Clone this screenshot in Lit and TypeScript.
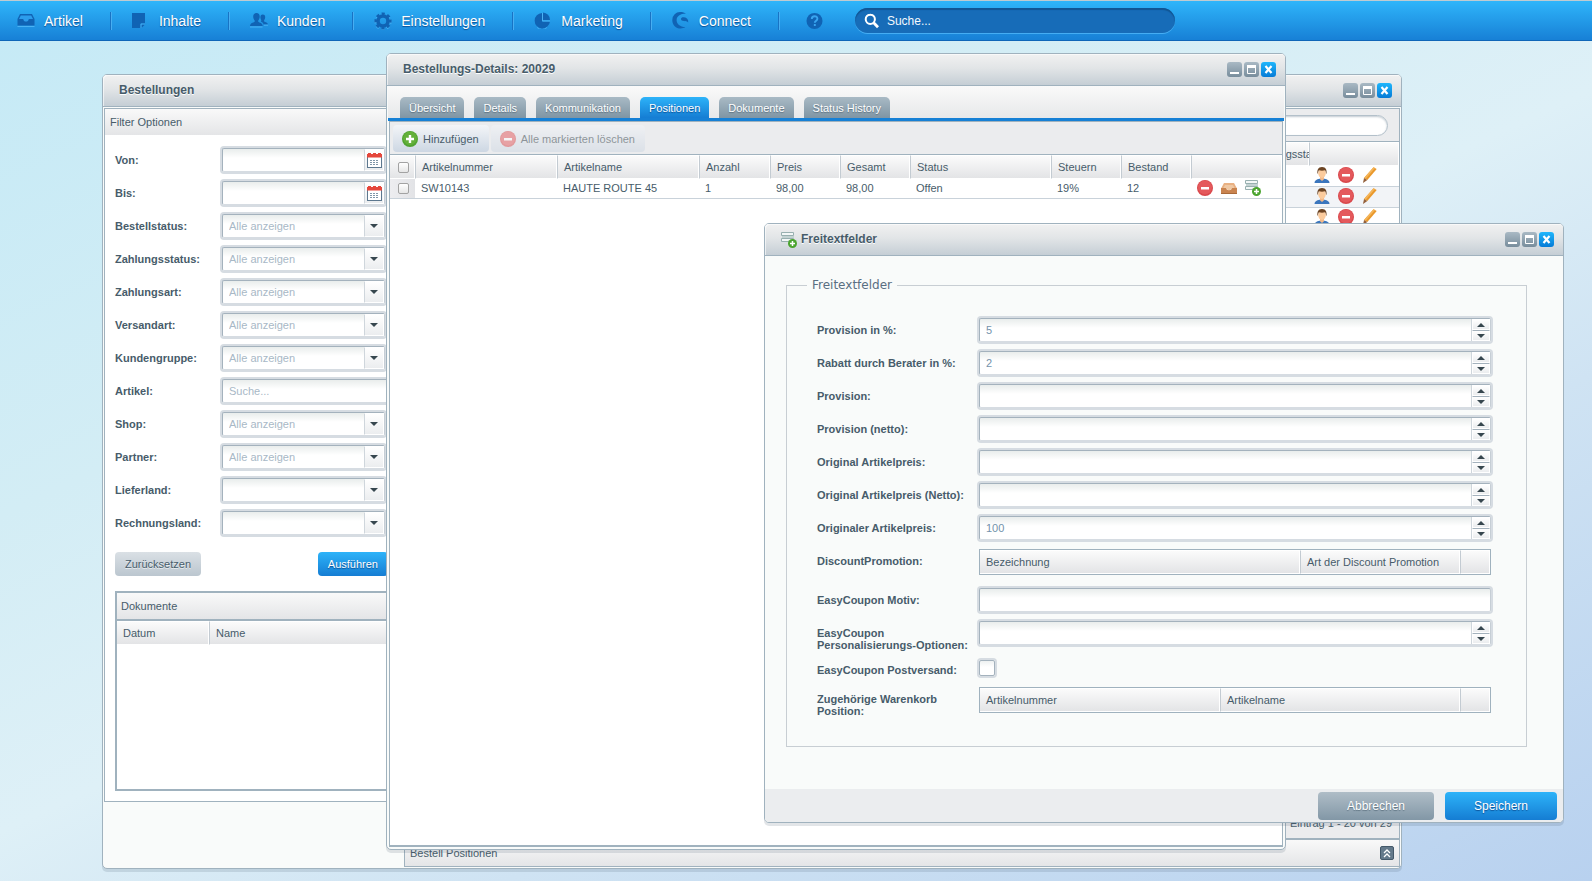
import { LitElement, html, css, svg, nothing } from "lit";
import { customElement, property } from "lit/decorators.js";
import { classMap } from "lit/directives/class-map.js";

/* ---------- icons ---------- */

const trayNav = html`<svg width="18" height="17" viewBox="0 0 18 17" aria-hidden="true">
  <path d="M3 2h12l2.500 5v6.500h-17V7z" fill="#1063b4"/>
  <path d="M3.800 3.500h10.400L16 7h-4.200c-.4 1.800-1.300 2.600-2.800 2.600S6.600 8.800 6.200 7H2z" fill="#2c9dec"/>
  <path d="M.5 14.500h17" stroke="#4ab3f5"/></svg>`;
const pageNav = html`<svg width="18" height="17" viewBox="0 0 18 17" aria-hidden="true">
  <path d="M0 1h13v10.500H8.500V16H0z" fill="#1063b4"/>
  <path d="M9.500 12.500H13L9.500 16z" fill="#1063b4"/>
  <path d="M9 16v-4h4" fill="none" stroke="#4ab3f5" stroke-width=".8"/></svg>`;
const usersNav = html`<svg width="18" height="17" viewBox="0 0 18 17" aria-hidden="true">
  <path d="M6.500 1c2.200 0 3.300 1.500 3.200 3.800-.1 1.600-.6 2.800-1.500 3.600v1.400c1.300.9 4.300 1.300 4.500 4.200H0c.2-2.900 3.200-3.300 4.700-4.200V8.400C3.800 7.600 3.300 6.400 3.200 4.800 3.200 2.500 4.300 1 6.500 1z" fill="#1063b4"/>
  <path d="M12.700 2.500c1.800 0 2.600 1.200 2.500 3-.1 1.200-.5 2.100-1.100 2.800v1.100c1.200.7 3.700 1 3.900 3.100h-4.300c-.5-1.600-1.700-2.400-2.900-3 .3-.3.5-.8.500-1.200-.5-.6-.8-1.600-.9-2.800 0-1.800.6-3 2.300-3z" fill="#1063b4"/>
  <path d="M0 15h12.500M14 13.200h4" stroke="#4ab3f5"/></svg>`;
const gearNav = html`<svg width="18" height="18" viewBox="0 0 18 18" aria-hidden="true">
  <circle cx="9" cy="10" r="7" fill="none" stroke="#4ab3f5" stroke-width="3" stroke-dasharray="3 2.498" stroke-dashoffset="1.500"/>
  <circle cx="9" cy="9" r="5" fill="none" stroke="#1063b4" stroke-width="3.600"/>
  <circle cx="9" cy="9" r="7" fill="none" stroke="#1063b4" stroke-width="3.200" stroke-dasharray="3 2.498" stroke-dashoffset="1.500"/></svg>`;
const pieNav = html`<svg width="18" height="17" viewBox="0 0 18 17" aria-hidden="true">
  <path d="M8 1a7.700 7.700 0 1 0 8 8.500H8z" fill="#1063b4"/>
  <path d="M9 .5A7.500 7.500 0 0 1 16 8H9z" fill="#1063b4"/>
  <path d="M8.500 1v8H16" fill="none" stroke="#4ab3f5"/>
  <path d="M3 15.500a8 8 0 0 0 10 0" fill="none" stroke="#4ab3f5" stroke-width=".8"/></svg>`;
const connectNav = html`<svg width="18" height="17" viewBox="0 0 18 17" aria-hidden="true">
  <path d="M14 1.600C12.500.6 10.500 0 8.500 0A8 8 0 0 0 .300 8.200C.300 13 4 16.500 8.500 16.500c2 0 3.500-.4 4.800-1.400C8 15 4.600 12 4.600 8.300 4.600 4.500 8 1.800 14 1.600z" fill="#1063b4"/>
  <path d="M9 7c0-1.500 1.400-2 3-1.800 3 .3 4.600 2.300 4.200 5.300-1.200-1.300-2.600-1.300-4.200-1.500C10 8.800 9 8.300 9 7z" fill="#1063b4"/></svg>`;
const helpNav = html`<svg width="17" height="18" viewBox="0 0 17 18" aria-hidden="true">
  <circle cx="8.500" cy="9" r="8" fill="#1063b4"/>
  <path d="M5.800 7c0-3.700 5.600-3.600 5.600-.3 0 2-2.600 1.900-2.600 4M8.800 12v2" fill="none" stroke="#39a5f0" stroke-width="1.900"/></svg>`;
const lens = html`<svg width="16" height="16" viewBox="0 0 16 16" aria-hidden="true">
  <circle cx="6.300" cy="6.300" r="4.600" fill="none" stroke="#fff" stroke-width="2"/>
  <path d="M9.700 9.700l4.300 4.500" stroke="#fff" stroke-width="2.800"/></svg>`;
const plusIcon = html`<svg width="16" height="16" viewBox="0 0 16 16" aria-hidden="true">
  <circle cx="8" cy="8" r="8" fill="#51a332"/><circle cx="8" cy="7.200" r="6.800" fill="#63b03a"/>
  <path d="M8 4v8M4 8h8" stroke="#fff" stroke-width="2.400"/></svg>`;
const minusIcon = html`<svg width="16" height="16" viewBox="0 0 16 16" aria-hidden="true">
  <circle cx="8" cy="8" r="8" fill="#d9484c"/><circle cx="8" cy="7.400" r="7" fill="#e4595c"/>
  <rect x="4" y="7" width="8" height="2.500" fill="#fff"/></svg>`;
const trayIcon = html`<svg width="16" height="16" viewBox="0 0 16 16" aria-hidden="true">
  <path d="M3 3h10l3 5.500H0z" fill="#e9b183"/><path d="M0 8h5.200c.3 1.600 1 2.200 2.800 2.200s2.500-.6 2.800-2.200H16v5.500H0z" fill="#c98450"/>
  <path d="M0 13h16v1H0z" fill="#a96a3a"/><path d="M4 5h8l1.500 3h-2.800c-.3 1.500-1 2-2.700 2s-2.400-.5-2.700-2H2.500z" fill="#f0c9a4"/></svg>`;
const fieldsShapes = svg`
  <path d="M.5.500h12v3H.5zM.5 6.500h12v3H.5z" fill="#f3f7f7" stroke="#98b0b0"/>
  <path d="M1 4h12v2H1z" fill="#c3d2d2"/>
  <circle cx="11.500" cy="11.500" r="4.500" fill="#4ba42f"/><path d="M11.500 9v5M9 11.500h5" stroke="#fff" stroke-width="1.500"/>`;
const fieldsIcon = html`<svg width="16" height="16" viewBox="0 0 16 16" aria-hidden="true">${fieldsShapes}</svg>`;
const userIcon = html`<svg width="16" height="16" viewBox="0 0 16 16" aria-hidden="true">
  <path d="M.5 16c0-2.600 2-3.700 5-4.300h5c3 .6 5 1.700 5 4.300z" fill="#3b76bd"/>
  <path d="M6 9h4v3.200L8 14l-2-1.800z" fill="#f3b98a"/>
  <ellipse cx="8" cy="6.300" rx="3.800" ry="4.700" fill="#fbcb9d"/>
  <path d="M3.500 7C3 3 4 0 8 0s5 3 4.500 7c-.8-.8-.5-3-1.500-3.700-2 .5-4 .5-6 0-1 .7-.7 2.900-1.500 3.700z" fill="#6d4524"/></svg>`;
const pencilIcon = html`<svg width="16" height="16" viewBox="0 0 16 16" aria-hidden="true">
  <path d="M11.500.3l3.200 1.800L5.300 13 2 11z" fill="#e9982b"/><path d="M11.500.3l1.500.8L3.500 12 2 11z" fill="#f4b55a"/>
  <path d="M2 11l3.300 2L1 16z" fill="#94603b"/></svg>`;
const calendarIcon = html`<svg width="15" height="15" viewBox="0 0 15 15" aria-hidden="true">
  <rect x=".5" y="1.500" width="14" height="13" fill="#fff" stroke="#5d788f"/>
  <path d="M0 1h1V0h3v1h2V0h3v1h2V0h3v1h1v3.500H0z" fill="#e5473c"/>
  <path d="M3 7.500h9M3 9.500h9M3 11.500h9" stroke="#7f96a8" stroke-dasharray="2 1"/></svg>`;
const arrowDown = svg`<path d="M0 0h8L4 4z" fill="#37474f"/>`;
const arrowUp = svg`<path d="M0 4h8L4 0z" fill="#37474f"/>`;
const arrow = (shape: unknown) =>
  html`<svg width="8" height="4" viewBox="0 0 8 4" aria-hidden="true">${shape}</svg>`;

/* ---------- window frame ---------- */

@customElement("desk-window")
export class DeskWindow extends LitElement {
  @property() heading = "";

  static styles = css`
    :host {
      display: flex;
      flex-direction: column;
      box-sizing: border-box;
      border: 1px solid #a0b2be;
      border-radius: 5px;
      background: #f9fbfa;
      box-shadow: 0 3px 0 rgba(60, 80, 100, 0.15);
    }
    header {
      display: flex;
      align-items: center;
      height: 31px;
      padding: 0 9px 0 16px;
      border-bottom: 1px solid #a0b2be;
      border-radius: 4px 4px 0 0;
      background: linear-gradient(#f1f1f1, #e2e5e7 45%, #c5ced5);
      box-shadow: inset 1px 1px 0 rgba(255, 255, 255, 0.6);
    }
    h2 {
      flex: 1;
      margin: 0;
      padding-bottom: 2px;
      font-size: 12px;
      line-height: 16px;
      font-weight: bold;
      color: #475c6a;
      text-shadow: 0 1px 0 #fff;
    }
    ::slotted(svg) {
      margin-right: 4px;
    }
    .tools {
      display: flex;
      gap: 2px;
    }
    button {
      display: block;
      width: 15px;
      height: 15px;
      padding: 0;
      border: 0;
      border-radius: 3px;
      background: linear-gradient(#a9b9c4, #788d9c);
    }
    button.close {
      background: linear-gradient(#1fb6fc, #067bd6);
    }
    svg {
      display: block;
    }
    .body {
      flex: 1;
      display: flex;
      flex-direction: column;
      min-height: 0;
      padding: 0 1px;
    }
  `;

  render() {
    return html`
      <header>
        <slot name="icon"></slot>
        <h2>${this.heading}</h2>
        <div class="tools">
          <button aria-label="Minimieren">
            <svg width="15" height="15"><path d="M3 11h9" stroke="#fff" stroke-width="2" /></svg>
          </button>
          <button aria-label="Maximieren">
            <svg width="15" height="15">
              <path d="M3.500 4v7.500h8V4" fill="none" stroke="#fff" />
              <path d="M3 4.500h9" stroke="#fff" stroke-width="3" />
            </svg>
          </button>
          <button class="close" aria-label="Schließen">
            <svg width="15" height="15"><path d="M4.500 4l6 7M10.500 4l-6 7" stroke="#fff" stroke-width="2.200" /></svg>
          </button>
        </div>
      </header>
      <div class="body"><slot></slot></div>
    `;
  }
}

/* ---------- data ---------- */

const menu = [
  { label: "Artikel", icon: trayNav },
  { label: "Inhalte", icon: pageNav },
  { label: "Kunden", icon: usersNav },
  { label: "Einstellungen", icon: gearNav },
  { label: "Marketing", icon: pieNav },
  { label: "Connect", icon: connectNav },
];

type FilterKind = "date" | "combo" | "text";
const filters: { label: string; kind: FilterKind; hint: string }[] = [
  { label: "Von:", kind: "date", hint: "" },
  { label: "Bis:", kind: "date", hint: "" },
  { label: "Bestellstatus:", kind: "combo", hint: "Alle anzeigen" },
  { label: "Zahlungsstatus:", kind: "combo", hint: "Alle anzeigen" },
  { label: "Zahlungsart:", kind: "combo", hint: "Alle anzeigen" },
  { label: "Versandart:", kind: "combo", hint: "Alle anzeigen" },
  { label: "Kundengruppe:", kind: "combo", hint: "Alle anzeigen" },
  { label: "Artikel:", kind: "text", hint: "Suche..." },
  { label: "Shop:", kind: "combo", hint: "Alle anzeigen" },
  { label: "Partner:", kind: "combo", hint: "Alle anzeigen" },
  { label: "Lieferland:", kind: "combo", hint: "" },
  { label: "Rechnungsland:", kind: "combo", hint: "" },
];

const tabs = ["Übersicht", "Details", "Kommunikation", "Positionen", "Dokumente", "Status History"];

const positionColumns = [
  { title: "Artikelnummer", cls: "wide", value: "SW10143" },
  { title: "Artikelname", cls: "wide", value: "HAUTE ROUTE 45" },
  { title: "Anzahl", cls: "count", value: "1" },
  { title: "Preis", cls: "narrow", value: "98,00" },
  { title: "Gesamt", cls: "narrow", value: "98,00" },
  { title: "Status", cls: "status", value: "Offen" },
  { title: "Steuern", cls: "narrow", value: "19%" },
  { title: "Bestand", cls: "narrow", value: "12" },
];

const amounts = [
  { label: "Provision in %:", value: "5" },
  { label: "Rabatt durch Berater in %:", value: "2" },
  { label: "Provision:", value: "" },
  { label: "Provision (netto):", value: "" },
  { label: "Original Artikelpreis:", value: "" },
  { label: "Original Artikelpreis (Netto):", value: "" },
  { label: "Originaler Artikelpreis:", value: "100" },
];

/* ---------- page ---------- */

@customElement("app-root")
export class AppRoot extends LitElement {
  static styles = css`
    :host {
      display: flex;
      flex-direction: column;
      min-height: 100vh;
      font-family: "Liberation Sans", Arial, sans-serif;
      font-size: 11px;
      line-height: 12px;
      color: #475c6a;
    }
    * {
      box-sizing: border-box;
    }
    button,
    input,
    select {
      margin: 0;
      font: inherit;
      color: inherit;
    }
    svg {
      display: block;
      flex: none;
    }

    /* menu bar */
    .menubar {
      display: flex;
      align-items: center;
      height: 41px;
      border-top: 1px solid #bfcbd1;
      border-bottom: 1px solid #0f66b8;
      background: linear-gradient(#2fb5fa, #1780d6);
      box-shadow: 0 3px 0 rgba(70, 90, 110, 0.17);
      position: relative;
    }
    .menubar a {
      display: flex;
      align-items: center;
      gap: 9px;
      height: 18px;
      padding: 0 27px 0 21px;
      border-right: 1px solid #1873c4;
      box-shadow: 1px 0 0 #48aef2;
      font-size: 14px;
      line-height: 18px;
      color: #fff;
      text-decoration: none;
      text-shadow: 0 1px 1px #0b4f94;
    }
    .menubar a:first-child {
      padding-left: 17px;
    }
    .menubar .help {
      padding: 0 32px 0 27px;
      border: 0;
      box-shadow: none;
    }
    .search {
      display: flex;
      align-items: center;
      gap: 7px;
      width: 320px;
      height: 25px;
      padding: 0 9px;
      border-radius: 13px;
      background: #176cb8;
      box-shadow: inset 0 2px 1px #115694, 0 1px 0 #45adf3;
    }
    .search input {
      flex: 1;
      min-width: 0;
      padding: 0;
      border: 0;
      outline: 0;
      background: none;
      font-size: 12px;
      color: #fff;
    }
    .search input::placeholder {
      color: #f2f8fd;
      opacity: 1;
    }

    /* desktop canvas with free windows */
    .desktop {
      flex: 1;
      position: relative;
      background: linear-gradient(155deg, #c6eaf6 0%, #d3edf5 30%, #def0f7 50%, #cfe3f3 68%, #b8d1ef 100%);
    }
    desk-window {
      position: absolute;
    }
    .orders {
      left: 102px;
      top: 33px;
      width: 1300px;
      height: 795px;
    }
    .details {
      left: 386px;
      top: 12px;
      width: 900px;
      height: 797px;
    }
    .freetext {
      left: 764px;
      top: 182px;
      width: 800px;
      min-height: 600px;
    }

    /* form parts */
    .field {
      display: flex;
      height: 24px;
      margin: 2px;
      border: 1px solid #a4b2bd;
      border-right-color: #c6ced5;
      border-bottom-color: #d6dce2;
      border-radius: 2px;
      box-shadow: 0 0 0 2px #d6dce2;
      background: linear-gradient(#e9edec, #fff 9px);
    }
    .field input,
    .field select {
      flex: 1;
      min-width: 0;
      padding: 0 6px;
      border: 0;
      outline: 0;
      appearance: none;
      background: none;
      color: #7392ab;
    }
    .field input[type="number"] {
      appearance: textfield;
    }
    .field input::-webkit-inner-spin-button {
      display: none;
    }
    .field input::placeholder {
      color: #a8b8c6;
      opacity: 1;
    }
    .field select {
      color: #a8b8c6;
    }
    .trigger {
      display: flex;
      align-items: center;
      justify-content: center;
      width: 20px;
      padding: 0;
      border: 1px solid #fff;
      border-left: 1px solid #cfd6dc;
      background: linear-gradient(#fff, #ebedef);
    }
    .combo .trigger {
      pointer-events: none;
    }
    .spin {
      display: flex;
      flex-direction: column;
      width: 19px;
      border-left: 1px solid #cfd6dc;
    }
    .spin button {
      flex: 1;
      display: flex;
      align-items: center;
      justify-content: center;
      padding: 0;
      border: 1px solid #fff;
      background: linear-gradient(#fff, #ebedef);
    }
    .spin button + button {
      border-top: 1px solid #a4b2bd;
    }
    label,
    .caption {
      padding-top: 8px;
      font-weight: bold;
    }

    /* tables and panels */
    table {
      width: 100%;
      border-collapse: separate;
      border-spacing: 0;
      table-layout: fixed;
    }
    th {
      height: 24px;
      padding: 0 1px 0 6px;
      border-left: 1px solid #c3cbd2;
      border-top: 1px solid #fff;
      border-bottom: 1px solid #fff;
      background: linear-gradient(#fbfbfb, #e3e4e6);
      box-shadow: inset -1px 0 0 #fff;
      font-weight: normal;
      text-align: left;
      white-space: nowrap;
      overflow: hidden;
    }
    th:first-child {
      border-left: 0;
    }
    .bar {
      display: flex;
      align-items: center;
      justify-content: space-between;
      height: 26px;
      padding: 0 5px;
      background: linear-gradient(#f9f9f9, #e4e5e7);
    }
    .panel {
      border: 1px solid #a0b2be;
      background: #fff;
    }
    .button {
      height: 24px;
      padding: 0 10px;
      border: 0;
      border-radius: 4px;
      background: linear-gradient(#dae0e5, #bbc6cf);
      text-shadow: 0 1px 0 #e8ecef;
    }
    .button.primary {
      background: linear-gradient(#2db3f9, #157dd3);
      color: #fff;
      text-shadow: 0 1px 1px #0b4f94;
    }
    .icons {
      display: flex;
      gap: 8px;
    }
    .icons button {
      padding: 0;
      border: 0;
      background: none;
    }

    /* orders window */
    .split {
      flex: 1;
      display: flex;
      align-items: flex-start;
      gap: 3px;
      min-height: 0;
      padding: 1px 0;
    }
    .filter {
      width: 297px;
    }
    .filter form {
      display: flex;
      flex-direction: column;
      gap: 5px;
      padding: 11px 10px 10px;
    }
    .filter .row {
      display: grid;
      grid-template-columns: 105px minmax(0, 1fr);
    }
    .filter .field {
      margin-right: 5px;
    }
    .filter .field.plain {
      margin-right: 0;
    }
    .actions {
      display: flex;
      justify-content: space-between;
      padding: 10px 2px 10px 0;
    }
    .docs {
      height: 200px;
      border-width: 2px;
    }
    .docs .bar {
      border-bottom: 2px solid #a0b2be;
      height: 28px;
      padding: 0 4px;
    }
    .docs .date {
      width: 92px;
    }
    .list {
      flex: 1;
      align-self: stretch;
      display: flex;
      flex-direction: column;
    }
    .grid {
      flex: 1;
      display: flex;
      flex-direction: column;
      border-bottom-width: 2px;
    }
    .grid .tools {
      display: flex;
      justify-content: flex-end;
      height: 33px;
      padding: 6px 11px;
      border-bottom: 1px solid #a0b2be;
      background: #ebecee;
    }
    .pill {
      width: 170px;
      height: 21px;
      padding: 0 10px;
      border: 1px solid #b3c0ca;
      border-radius: 11px;
      background: #fff;
      box-shadow: inset 0 1px 2px #c3cbd2;
    }
    .grid tbody tr:nth-child(even) {
      background: #f2f4f7;
    }
    .grid td {
      height: 21px;
      padding: 0 5px 2px;
      border-bottom: 1px solid #c9d2da;
    }
    .grid .pay {
      width: 64px;
    }
    .grid .act {
      width: 90px;
    }
    .paging {
      display: flex;
      align-items: center;
      justify-content: flex-end;
      height: 31px;
      margin-top: auto;
      padding: 0 7px;
      background: #ebecee;
    }
    .below {
      border-top: 0;
    }
    .expand {
      width: 14px;
      height: 14px;
      padding: 0;
      border: 1px solid #44596a;
      border-radius: 2px;
      background: #647a8b;
    }

    /* details window */
    .tabs {
      display: flex;
      align-items: flex-end;
      gap: 10px;
      height: 35px;
      padding: 0 12px;
      border-bottom: 3px solid #1680d5;
      background: linear-gradient(#fafafa, #e7e8ea);
    }
    .tabs button {
      height: 21px;
      padding: 0 9px;
      border: 0;
      border-radius: 5px 5px 0 0;
      background: linear-gradient(#a9bac5, #7f95a4);
      color: #fff;
      text-shadow: 0 1px 1px #5d7280;
    }
    .tabs .active {
      background: linear-gradient(#2db3f9, #157dd3);
      text-shadow: 0 1px 1px #0b4f94;
    }
    .positions {
      flex: 1;
      margin: 0 1px 2px;
      border-bottom-width: 2px;
    }
    .toolbar {
      display: flex;
      gap: 2px;
      height: 33px;
      padding: 3px;
      border-bottom: 1px solid #a0b2be;
      background: #ebecee;
    }
    .toolbar button {
      display: flex;
      align-items: center;
      gap: 5px;
      height: 27px;
      padding: 0 10px 0 9px;
      border: 0;
      border-radius: 4px;
      background: linear-gradient(#f3f5f8, #cdd7e3);
    }
    .toolbar button:disabled {
      color: #2f3c45;
      opacity: 0.5;
    }
    .positions .tick {
      width: 25px;
      padding: 0 0 0 8px;
    }
    .positions .wide {
      width: 142px;
    }
    .positions .count {
      width: 71px;
    }
    .positions .status {
      width: 141px;
    }
    .positions .narrow {
      width: 70px;
    }
    .positions td {
      height: 20px;
      padding: 0 6px 2px;
      border-bottom: 1px solid #c9d2da;
    }
    .positions td.tick {
      padding: 0 0 0 8px;
      background: linear-gradient(90deg, #ededf0, #e2e3e6);
    }
    .tick input {
      display: block;
      width: 11px;
      height: 11px;
      appearance: none;
      border: 1px solid #a2a2a2;
      border-radius: 2px;
      background: linear-gradient(#fff, #e6e6e6);
    }

    /* free text window */
    .sheet {
      flex: 1;
      padding: 22px 35px 42px 20px;
    }
    fieldset {
      min-width: 0;
      margin: 0;
      padding: 24px 33px 29px 30px;
      border: 1px solid #c8ced3;
    }
    legend {
      margin-left: -10px;
      padding: 0 5px;
      font-family: "DejaVu Sans", sans-serif;
      font-size: 12px;
      line-height: 14px;
      color: #5a6f82;
    }
    .rows {
      display: flex;
      flex-direction: column;
      gap: 5px;
    }
    .rows .row {
      display: grid;
      grid-template-columns: 160px minmax(0, 1fr);
      align-items: start;
    }
    .rows .tall {
      min-height: 34px;
    }
    .rows .short {
      min-height: 22px;
    }
    .rows .short label {
      padding-top: 6px;
    }
    .check {
      width: 16px;
      height: 16px;
      margin: 2px;
      appearance: none;
      border: 1px solid #a4b2bd;
      border-radius: 2px;
      box-shadow: 0 0 0 2px #d6dce2;
      background: linear-gradient(#eef1f1, #fff 6px);
    }
    .mini {
      margin: 2px;
    }
    .mini .type {
      width: 160px;
    }
    .mini .name {
      width: 240px;
    }
    .mini .rest {
      width: 30px;
    }
    .foot {
      display: flex;
      justify-content: flex-end;
      gap: 11px;
      margin: 0 -1px;
      padding: 3px 6px 2px;
      border-radius: 0 0 4px 4px;
      background: #ebedef;
    }
    .foot button {
      width: 112px;
      height: 28px;
      font-size: 12px;
    }
    .foot .cancel {
      width: 116px;
      background: linear-gradient(#afbdc7, #8297a6);
      color: #fff;
      text-shadow: 0 1px 1px #5d7280;
    }
  `;

  private filterRow(f: (typeof filters)[number], i: number) {
    const id = `filter-${i}`;
    const control =
      f.kind === "combo"
        ? html`<div class="field combo">
            <select id=${id}><option>${f.hint}</option></select>
            <span class="trigger">${arrow(arrowDown)}</span>
          </div>`
        : f.kind === "date"
          ? html`<div class="field">
              <input id=${id} type="text" />
              <button class="trigger" type="button" aria-label="Kalender">${calendarIcon}</button>
            </div>`
          : html`<div class="field plain"><input id=${id} type="text" placeholder=${f.hint} /></div>`;
    return html`<div class="row"><label for=${id}>${f.label}</label>${control}</div>`;
  }

  private numberRow(label: string, value: string, id: string, tall = false) {
    return html`<div class=${classMap({ row: true, tall })}>
      <label for=${id}>${label}</label>
      <div class="field">
        <input id=${id} type="number" .value=${value} />
        <div class="spin">
          <button type="button" aria-label="Erhöhen">${arrow(arrowUp)}</button>
          <button type="button" aria-label="Verringern">${arrow(arrowDown)}</button>
        </div>
      </div>
    </div>`;
  }

  private ordersWindow() {
    return html`<desk-window class="orders" heading="Bestellungen">
      <div class="split">
        <section class="panel filter">
          <div class="bar">Filter Optionen</div>
          <form>
            ${filters.map((f, i) => this.filterRow(f, i))}
            <div class="actions">
              <button class="button" type="button">Zurücksetzen</button>
              <button class="button primary" type="button">Ausführen</button>
            </div>
            <div class="panel docs">
              <div class="bar">Dokumente</div>
              <table>
                <thead><tr><th class="date">Datum</th><th>Name</th></tr></thead>
              </table>
            </div>
          </form>
        </section>
        <section class="list">
          <div class="panel grid">
            <div class="tools"><input class="pill" type="text" aria-label="Bestellungen durchsuchen" /></div>
            <table>
              <thead>
                <tr><th>Bestellnummer</th><th class="pay">Zahlungsstatus</th><th class="act"></th></tr>
              </thead>
              <tbody>
                ${[1, 2, 3].map(
                  () => html`<tr>
                    <td></td>
                    <td></td>
                    <td>
                      <div class="icons">
                        <button aria-label="Kunde öffnen">${userIcon}</button>
                        <button aria-label="Löschen">${minusIcon}</button>
                        <button aria-label="Bearbeiten">${pencilIcon}</button>
                      </div>
                    </td>
                  </tr>`,
                )}
              </tbody>
            </table>
            <div class="paging">Eintrag 1 - 20 von 29</div>
          </div>
          <div class="panel below">
            <div class="bar">
              Bestell Positionen
              <button class="expand" aria-label="Aufklappen">
                <svg width="12" height="12">
                  <path d="M3 6l3-3 3 3M3 10l3-3 3 3" fill="none" stroke="#fff" stroke-width="1.300" />
                </svg>
              </button>
            </div>
          </div>
        </section>
      </div>
    </desk-window>`;
  }

  private detailsWindow() {
    return html`<desk-window class="details" heading="Bestellungs-Details: 20029">
      <nav class="tabs" role="tablist">
        ${tabs.map((t) => html`<button role="tab" class=${t === "Positionen" ? "active" : nothing}>${t}</button>`)}
      </nav>
      <section class="panel positions">
        <div class="toolbar">
          <button>${plusIcon}Hinzufügen</button>
          <button disabled>${minusIcon}Alle markierten löschen</button>
        </div>
        <table>
          <thead>
            <tr>
              <th class="tick"><input type="checkbox" aria-label="Alle auswählen" /></th>
              ${positionColumns.map((c) => html`<th class=${c.cls}>${c.title}</th>`)}
              <th></th>
            </tr>
          </thead>
          <tbody>
            <tr>
              <td class="tick"><input type="checkbox" aria-label="Position auswählen" /></td>
              ${positionColumns.map((c) => html`<td>${c.value}</td>`)}
              <td>
                <div class="icons">
                  <button aria-label="Löschen">${minusIcon}</button>
                  <button aria-label="Artikel öffnen">${trayIcon}</button>
                  <button aria-label="Freitextfelder">${fieldsIcon}</button>
                </div>
              </td>
            </tr>
          </tbody>
        </table>
      </section>
    </desk-window>`;
  }

  private freetextWindow() {
    return html`<desk-window class="freetext" heading="Freitextfelder">
      <svg slot="icon" width="16" height="16" viewBox="0 0 16 16" aria-hidden="true">${fieldsShapes}</svg>
      <div class="sheet">
        <fieldset>
          <legend>Freitextfelder</legend>
          <div class="rows">
            ${amounts.map((a, i) => this.numberRow(a.label, a.value, `amount-${i}`))}
            <div class="row tall">
              <span class="caption">DiscountPromotion:</span>
              <div class="panel mini">
                <table>
                  <thead>
                    <tr><th>Bezeichnung</th><th class="type">Art der Discount Promotion</th><th class="rest"></th></tr>
                  </thead>
                </table>
              </div>
            </div>
            <div class="row">
              <label for="motif">EasyCoupon Motiv:</label>
              <div class="field"><input id="motif" type="text" /></div>
            </div>
            ${this.numberRow("EasyCoupon Personalisierungs-Optionen:", "", "personal", true)}
            <div class="row short">
              <label for="postal">EasyCoupon Postversand:</label>
              <input class="check" id="postal" type="checkbox" />
            </div>
            <div class="row">
              <span class="caption">Zugehörige Warenkorb<br />Position:</span>
              <div class="panel mini">
                <table>
                  <thead>
                    <tr><th>Artikelnummer</th><th class="name">Artikelname</th><th class="rest"></th></tr>
                  </thead>
                </table>
              </div>
            </div>
          </div>
        </fieldset>
      </div>
      <div class="foot">
        <button class="button cancel">Abbrechen</button>
        <button class="button primary">Speichern</button>
      </div>
    </desk-window>`;
  }

  render() {
    return html`
      <nav class="menubar">
        ${menu.map((m) => html`<a href="#">${m.icon}<span>${m.label}</span></a>`)}
        <a class="help" href="#" aria-label="Hilfe">${helpNav}</a>
        <div class="search">${lens}<input type="text" placeholder="Suche..." aria-label="Suche" /></div>
      </nav>
      <main class="desktop">${this.ordersWindow()} ${this.detailsWindow()} ${this.freetextWindow()}</main>
    `;
  }
}
